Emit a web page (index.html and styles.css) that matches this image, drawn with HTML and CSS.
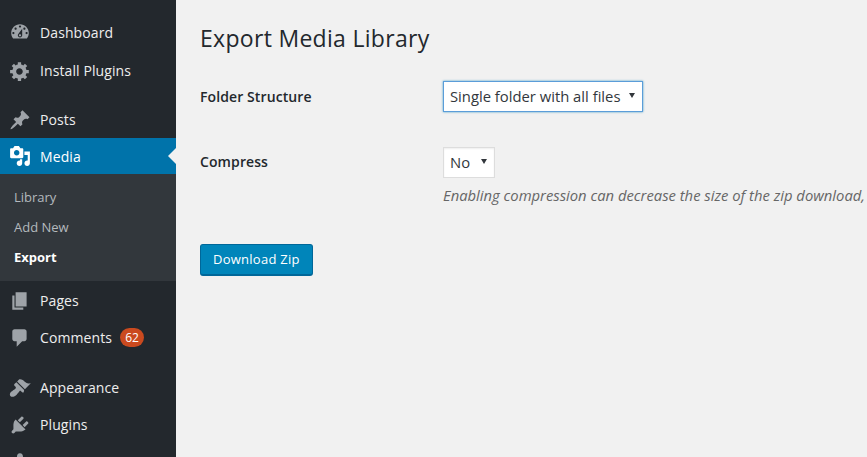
FILE: index.html
```html
<!DOCTYPE html>
<html lang="en">
<head>
<meta charset="utf-8">
<title>Export Media Library</title>
<link rel="stylesheet" href="styles.css">
</head>
<body>
<div class="app">
  <nav class="sidebar">
    <ul class="menu">
      <li class="item first"><svg class="icon" viewBox="0 0 20 20"><path d="M3.76 16h12.48c1.1-1.37 1.76-3.11 1.76-5 0-4.42-3.58-8-8-8s-8 3.58-8 8c0 1.89.66 3.63 1.76 5zM10 4c.55 0 1 .45 1 1s-.45 1-1 1-1-.45-1-1 .45-1 1-1zM6 6c.55 0 1 .45 1 1s-.45 1-1 1-1-.45-1-1 .45-1 1-1zm8 0c.55 0 1 .45 1 1s-.45 1-1 1-1-.45-1-1 .45-1 1-1zm-5.37 5.55L12 7v6c0 1.1-.9 2-2 2s-2-.9-2-2c0-.57.24-1.08.63-1.45zM4 10c.55 0 1 .45 1 1s-.45 1-1 1-1-.45-1-1 .45-1 1-1zm12 0c.55 0 1 .45 1 1s-.45 1-1 1-1-.45-1-1 .45-1 1-1zm-5 3c0-.55-.45-1-1-1s-1 .45-1 1 .45 1 1 1 1-.45 1-1z"/></svg>Dashboard</li>
      <li class="item"><svg class="icon" viewBox="0 0 20 20"><path d="M18 12h-2.18c-.17.7-.44 1.35-.81 1.93l1.54 1.54-2.1 2.1-1.54-1.54c-.58.36-1.23.63-1.91.79V19H8v-2.18c-.68-.16-1.33-.43-1.91-.79l-1.54 1.54-2.12-2.12 1.54-1.54c-.36-.58-.63-1.23-.79-1.91H1V9.03h2.17c.16-.7.44-1.35.8-1.94L2.43 5.55l2.1-2.1 1.54 1.54c.58-.37 1.24-.64 1.93-.81V2h3v2.18c.68.16 1.33.43 1.91.79l1.54-1.54 2.12 2.12-1.54 1.54c.36.59.64 1.24.8 1.94H18V12zm-8.5 1.5c1.66 0 3-1.34 3-3s-1.34-3-3-3-3 1.34-3 3 1.34 3 3 3z"/></svg>Install Plugins</li>
      <li class="item spaced"><svg class="icon" viewBox="0 0 20 20"><path d="M10.44 3.02l1.82-1.82 6.36 6.35-1.83 1.82c-1.05-.68-2.48-.57-3.41.36l-.75.75c-.92.93-1.04 2.35-.35 3.41l-1.83 1.82-2.41-2.41-2.8 2.79c-.42.42-3.38 2.71-3.8 2.29s1.86-3.39 2.28-3.81l2.79-2.79L4.1 9.36l1.83-1.82c1.05.69 2.48.57 3.41-.36l.75-.75c.93-.92 1.05-2.35.35-3.41z"/></svg>Posts</li>
      <li class="item active"><svg class="icon" viewBox="0 0 20 20"><path d="M13 11V4c0-.55-.45-1-1-1h-1.67L9 1H5L3.67 3H2c-.55 0-1 .45-1 1v7c0 .55.45 1 1 1h10c.55 0 1-.45 1-1zM7 4.5c1.38 0 2.5 1.12 2.5 2.5S8.38 9.5 7 9.5 4.5 8.38 4.5 7 5.62 4.5 7 4.5zM14 6h5v10.5c0 1.38-1.12 2.5-2.5 2.5S14 17.88 14 16.5s1.12-2.5 2.5-2.5c.17 0 .34.02.5.05V9h-3V6zm-4 8.05V13h2v3.5c0 1.38-1.12 2.5-2.5 2.5S7 17.88 7 16.5 8.12 14 9.5 14c.17 0 .34.02.5.05z"/></svg>Media</li>
      <li>
        <ul class="submenu">
          <li class="subitem">Library</li>
          <li class="subitem">Add New</li>
          <li class="subitem current">Export</li>
        </ul>
      </li>
      <li class="item"><svg class="icon" viewBox="0 0 20 20"><path d="M6 15V2h10v13H6zm-1 1h8v2H3V5h2v11z"/></svg>Pages</li>
      <li class="item"><svg class="icon" viewBox="0 0 20 20"><path d="M5 2h9c1.1 0 2 .9 2 2v7c0 1.1-.9 2-2 2h-2l-5 5v-5H5c-1.1 0-2-.9-2-2V4c0-1.1.9-2 2-2z"/></svg>Comments<span class="badge">62</span></li>
      <li class="item spaced-wide"><svg class="icon" viewBox="0 0 20 20"><path d="M14.48 11.06L7.41 3.99l1.5-1.5c.5-.56 2.3-.47 3.51.32 1.21.8 1.43 1.28 2.91 2.1 1.18.64 2.45 1.26 4.45.85zm-.71.71L6.7 4.7 4.93 6.47c-.39.39-.39 1.02 0 1.41l1.06 1.06c.39.39.39 1.03 0 1.42-.6.6-1.43 1.11-2.21 1.69-.35.26-.7.53-1.01.84C1.43 13.23 0 16 1.43 17.42c1.43 1.43 4.2 0 5.55-1.35.3-.31.58-.66.84-1.01.58-.78 1.08-1.61 1.69-2.21.39-.39 1.02-.39 1.41 0l1.06 1.06c.39.39 1.02.39 1.41 0z"/></svg>Appearance</li>
      <li class="item"><svg class="icon" viewBox="0 0 20 20"><path d="M13.11 4.36L9.87 7.6 8 5.73l3.24-3.24c.35-.34 1.05-.2 1.56.32.52.51.66 1.21.31 1.55zm-8 1.77l.91-1.12 9.01 9.01-1.19.84c-.71.71-2.63 1.16-3.82 1.16H6.14L4.9 17.26c-.59.59-1.54.59-2.12 0-.59-.58-.59-1.53 0-2.12l1.24-1.24v-3.88c0-1.13.4-3.19 1.09-3.89zm7.26 3.97l3.24-3.24c.34-.35 1.04-.21 1.55.31.52.51.66 1.21.31 1.55l-3.24 3.25z"/></svg>Plugins</li>
      <li class="item"><svg class="icon" viewBox="0 0 20 20"><path d="M10 9.25c-2.27 0-2.73-3.44-2.73-3.44C7 4.02 7.82 2 9.97 2c2.16 0 2.98 2.02 2.71 3.81 0 0-.41 3.44-2.68 3.44zm0 2.57L12.72 10c2.39 0 4.52 2.33 4.52 4.53v2.49s-3.65 1.13-7.24 1.13c-3.65 0-7.24-1.13-7.24-1.13v-2.49c0-2.25 1.94-4.48 4.47-4.48z"/></svg>Users</li>
    </ul>
  </nav>
  <main class="content">
    <h1 class="title">Export Media Library</h1>
    <form class="form">
      <div class="row">
        <label class="label">Folder Structure</label>
        <div class="field">
          <span class="select-wrap"><select class="select select-wide focused"><option>Single folder with all files</option></select></span>
        </div>
      </div>
      <div class="row row-compress">
        <label class="label">Compress</label>
        <div class="field">
          <span class="select-wrap"><select class="select select-narrow"><option>No</option></select></span>
          <p class="hint">Enabling compression can decrease the size of the zip download,</p>
        </div>
      </div>
      <button class="button" type="button">Download Zip</button>
    </form>
  </main>
</div>
</body>
</html>
```
FILE: styles.css
```css
* { box-sizing: border-box; }
html, body { margin: 0; height: 100%; overflow: hidden; }
body { font-family: "Open Sans", "Liberation Sans", sans-serif; font-size: 14px; color: #23282d; background: #f1f1f1; }
ul { list-style: none; margin: 0; padding: 0; }
.app { display: flex; height: 457px; overflow: hidden; }
.sidebar { width: 176px; flex: none; background: #23282d; padding-top: 13px; }
.item { display: flex; align-items: center; height: 37px; padding-left: 9px; color: #eee; font-size: 14px; letter-spacing: .1px; white-space: nowrap; position: relative; }
.item.first { height: 38px; margin-bottom: 1px; }
.item.spaced { margin-top: 12px; }
.item.spaced-wide { margin-top: 13px; }
.icon { width: 22px; height: 22px; margin-right: 9px; fill: #9ea3a8; flex: none; }
.item.active { background: #0073aa; color: #fff; height: 36px; }
.item.active .icon { fill: #fff; }
.item.active::after { content: ""; position: absolute; right: 0; top: 50%; margin-top: -8px; border: 8px solid transparent; border-right-color: #f1f1f1; border-left-width: 0; }
.submenu { background: #32373c; padding: 8px 0 9px; margin-bottom: 1px; }
.subitem { height: 30px; line-height: 30px; padding-left: 14px; font-size: 13px; color: #b4b9be; }
.subitem.current { color: #fff; font-weight: 700; }
.badge { display: inline-block; margin-left: 8px; height: 19px; min-width: 24px; padding: 0 5px; border-radius: 10px; background: #ca4a1f; color: #fff; font-size: 12px; letter-spacing: 0; line-height: 19px; text-align: center; }
.content { flex: 1; min-width: 0; padding: 0 0 0 24px; overflow: hidden; }
.title { margin: 0; padding-top: 21px; font-size: 23px; font-weight: 400; letter-spacing: .3px; line-height: 35px; color: #23282d; }
.form { padding-top: 25px; }
.row { display: grid; grid-template-columns: 243px 1fr; }
.row-compress { margin-top: 34px; }
.label { font-weight: 600; font-size: 14px; letter-spacing: .1px; line-height: 32px; white-space: nowrap; }
.row-compress .label { line-height: 30px; }
.select-wrap { display: inline-block; position: relative; vertical-align: top; }
.select-wrap::after { content: ""; position: absolute; right: 8px; top: 12px; border-style: solid; border-width: 5px 3px 0; border-color: #32373c transparent transparent; pointer-events: none; }
.select { display: block; appearance: none; -webkit-appearance: none; height: 31px; padding: 0 20px 0 6px; background: #fff; border: 1px solid #ddd; border-radius: 0; color: #32373c; font-family: inherit; font-size: 14.8px; line-height: 29px; box-shadow: inset 0 1px 2px rgba(0,0,0,.07); }
.select-wide { width: 200px; }
.select-narrow { width: 52px; }
.select.focused { border-color: #5b9dd9; box-shadow: 0 0 2px rgba(30,140,190,.8); }
.hint { margin: 7px 0 0; font-style: italic; font-size: 14.8px; line-height: 21px; color: #666; white-space: nowrap; }
.button { display: block; margin-top: 38px; height: 32px; padding: 0 12px 1px; background: #0085ba; border: 1px solid #006799; border-bottom-width: 2px; border-radius: 3px; color: #fff; font-family: inherit; font-size: 13px; letter-spacing: .25px; line-height: 28px; }
```
